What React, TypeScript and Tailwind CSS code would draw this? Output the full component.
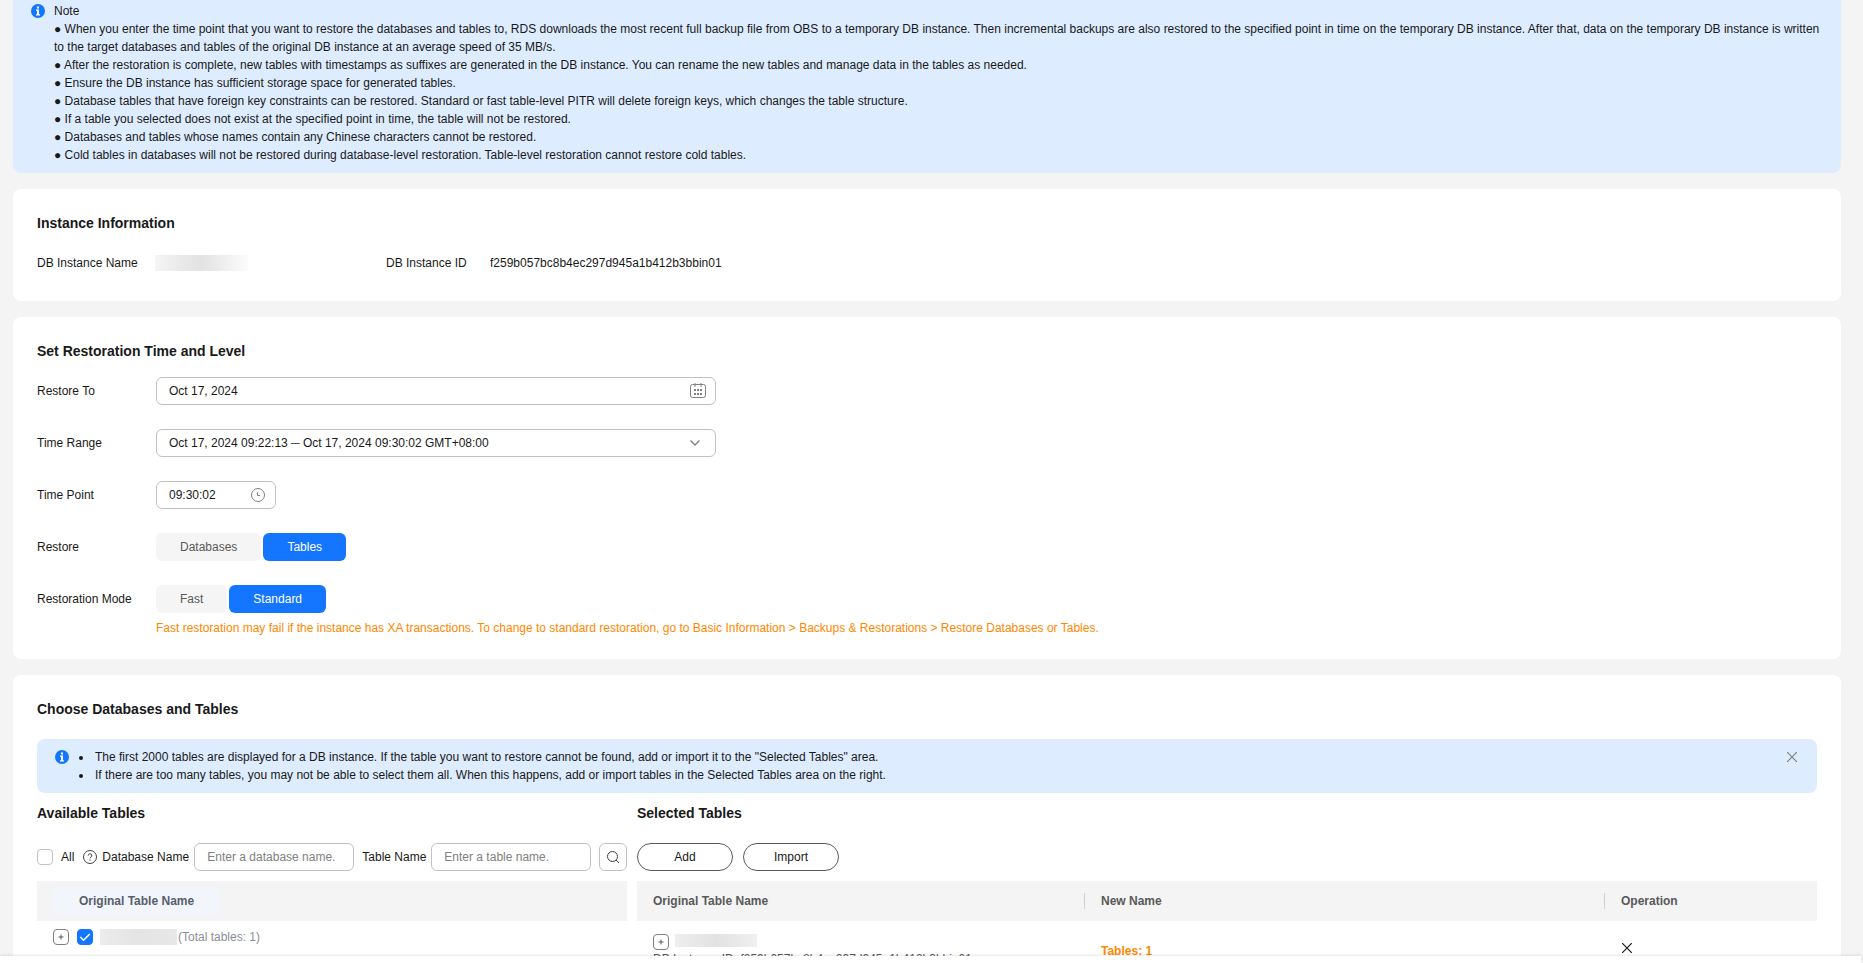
import { useState } from "react";

const notes = [
  "When you enter the time point that you want to restore the databases and tables to, RDS downloads the most recent full backup file from OBS to a temporary DB instance. Then incremental backups are also restored to the specified point in time on the temporary DB instance. After that, data on the temporary DB instance is written to the target databases and tables of the original DB instance at an average speed of 35 MB/s.",
  "After the restoration is complete, new tables with timestamps as suffixes are generated in the DB instance. You can rename the new tables and manage data in the tables as needed.",
  "Ensure the DB instance has sufficient storage space for generated tables.",
  "Database tables that have foreign key constraints can be restored. Standard or fast table-level PITR will delete foreign keys, which changes the table structure.",
  "If a table you selected does not exist at the specified point in time, the table will not be restored.",
  "Databases and tables whose names contain any Chinese characters cannot be restored.",
  "Cold tables in databases will not be restored during database-level restoration. Table-level restoration cannot restore cold tables.",
];

const instanceId = "f259b057bc8b4ec297d945a1b412b3bbin01";

function InfoIcon() {
  return (
    <svg className="w-3.5 h-3.5 shrink-0" viewBox="0 0 14 14" aria-hidden="true">
      <circle cx="7" cy="7" r="7" fill="#1476ff" />
      <path
        d="M6 2.500h2v2H6zM5 5.500H8v4.700h1v1.300H5v-1.300h1V6.800H5z"
        fill="#fff"
      />
    </svg>
  );
}

function CloseIcon() {
  return (
    <svg
      className="w-2.5 h-2.5"
      viewBox="0 0 10 10"
      fill="none"
      stroke="currentColor"
      strokeWidth="1.2"
      aria-hidden="true"
    >
      <path d="M0 0l10 10M10 0L0 10" />
    </svg>
  );
}

function ExpandButton({ label }: { label: string }) {
  return (
    <button
      type="button"
      aria-label={label}
      className="w-4 h-4 shrink-0 rounded border border-[#808080] flex items-center justify-center text-[#595959]"
    >
      <svg
        className="w-3.5 h-3.5"
        viewBox="0 0 14 14"
        stroke="currentColor"
        aria-hidden="true"
      >
        <path d="M7 4.500v5M4.500 7h5" />
      </svg>
    </button>
  );
}

function Segmented({
  label,
  options,
  value,
  onChange,
}: {
  label: string;
  options: string[];
  value: string;
  onChange: (v: string) => void;
}) {
  return (
    <div role="group" aria-label={label} className="flex gap-0.5">
      {options.map((option) => (
        <button
          key={option}
          type="button"
          aria-pressed={option === value}
          onClick={() => onChange(option)}
          className={
            option === value
              ? "h-7 px-6 rounded-md bg-[#1476ff] text-white"
              : "h-7 px-6 rounded-md bg-[#f5f5f5] text-[#595959]"
          }
        >
          {option}
        </button>
      ))}
    </div>
  );
}

export default function App() {
  const [level, setLevel] = useState("Tables");
  const [mode, setMode] = useState("Standard");
  const [showTip, setShowTip] = useState(true);

  return (
    <div className="h-screen flex flex-col bg-[#f4f4f4] font-['Liberation_Sans',Arial,sans-serif] text-xs leading-[18px] text-[#191919]">
      <main className="flex-1 min-h-0 overflow-y-auto [scrollbar-width:none] pl-[13px] pr-[22px] flex flex-col gap-4">
        {/* Note */}
        <section className="shrink-0 flex gap-[9px] bg-[#deecff] rounded-b-lg pt-0.5 pb-[9px] pl-[18px] pr-5">
          <div className="pt-0.5">
            <InfoIcon />
          </div>
          <div>
            <p>Note</p>
            {notes.map((note) => (
              <p key={note}>● {note}</p>
            ))}
          </div>
        </section>

        {/* Instance information */}
        <section className="shrink-0 bg-white rounded-lg px-6 pt-6 pb-[29px]">
          <h2 className="text-sm leading-5 font-bold">Instance Information</h2>
          <dl className="flex items-center mt-[21px]">
            <dt className="w-[118px]">DB Instance Name</dt>
            <dd className="w-[231px]">
              <div className="w-[93px] h-4 bg-linear-to-r from-[#f4f4f4] via-[#e2e2e2] to-[#fcfcfc]" />
            </dd>
            <dt className="w-[104px]">DB Instance ID</dt>
            <dd>{instanceId}</dd>
          </dl>
        </section>

        {/* Restoration settings */}
        <section className="shrink-0 bg-white rounded-lg px-6 pt-6 pb-[22px]">
          <h2 className="text-sm leading-5 font-bold">
            Set Restoration Time and Level
          </h2>
          <div className="grid grid-cols-[119px_1fr] items-center gap-y-6 mt-4">
            <label htmlFor="restore-to">Restore To</label>
            <div className="relative w-[560px]">
              <input
                id="restore-to"
                defaultValue="Oct 17, 2024"
                className="block w-full h-7 px-3 border border-[#c2c2c2] rounded-md"
              />
              <svg
                className="absolute right-2.5 top-1.5 w-4 h-4 text-[#808080]"
                viewBox="0 0 16 16"
                fill="none"
                stroke="currentColor"
                aria-hidden="true"
              >
                <rect x="0.5" y="1.5" width="15" height="13" rx="2" />
                <path d="M5 0v4M11 0v4" />
                <path
                  d="M4 7h2M7 7h2M10 7h2M4 11h2M7 11h2M10 11h2"
                  strokeWidth="2"
                />
              </svg>
            </div>

            <label htmlFor="time-range">Time Range</label>
            <div className="relative w-[560px]">
              <select
                id="time-range"
                className="block w-full h-7 px-3 border border-[#c2c2c2] rounded-md appearance-none bg-white"
              >
                <option>
                  Oct 17, 2024 09:22:13 ─ Oct 17, 2024 09:30:02 GMT+08:00
                </option>
              </select>
              <svg
                className="absolute right-4 top-[11px] w-2.5 h-1.5 pointer-events-none text-[#808080]"
                viewBox="0 0 10 6"
                fill="none"
                stroke="currentColor"
                strokeWidth="1.4"
                aria-hidden="true"
              >
                <path d="M0.5 0.5L5 5l4.500-4.500" />
              </svg>
            </div>

            <label htmlFor="time-point">Time Point</label>
            <div className="relative w-[120px]">
              <input
                id="time-point"
                defaultValue="09:30:02"
                className="block w-full h-7 px-3 border border-[#c2c2c2] rounded-md"
              />
              <svg
                className="absolute right-[11px] top-[7px] w-3.5 h-3.5 text-[#808080]"
                viewBox="0 0 14 14"
                fill="none"
                stroke="currentColor"
                aria-hidden="true"
              >
                <circle cx="7" cy="7" r="6.5" />
                <path d="M6.500 4.500v3H9" />
              </svg>
            </div>

            <span>Restore</span>
            <Segmented
              label="Restore"
              options={["Databases", "Tables"]}
              value={level}
              onChange={setLevel}
            />

            <span>Restoration Mode</span>
            <Segmented
              label="Restoration Mode"
              options={["Fast", "Standard"]}
              value={mode}
              onChange={setMode}
            />
          </div>
          <p className="pl-[119px] mt-1.5 text-[#ff8800]">
            Fast restoration may fail if the instance has XA transactions. To
            change to standard restoration, go to Basic Information &gt; Backups
            &amp; Restorations &gt; Restore Databases or Tables.
          </p>
        </section>

        {/* Databases and tables */}
        <section className="shrink-0 bg-white rounded-t-lg px-6 pt-6 pb-6">
          <h2 className="text-sm leading-5 font-bold">
            Choose Databases and Tables
          </h2>

          {showTip && (
            <div className="flex items-start mt-5 bg-[#deecff] rounded-lg py-[9px] pl-[18px] pr-5">
              <div className="pt-0.5">
                <InfoIcon />
              </div>
              <ul className="flex-1 list-disc pl-6">
                <li className="pl-0.5">
                  The first 2000 tables are displayed for a DB instance. If the
                  table you want to restore cannot be found, add or import it to
                  the "Selected Tables" area.
                </li>
                <li className="pl-0.5">
                  If there are too many tables, you may not be able to select
                  them all. When this happens, add or import tables in the
                  Selected Tables area on the right.
                </li>
              </ul>
              <button
                type="button"
                aria-label="Close"
                onClick={() => setShowTip(false)}
                className="mt-1 text-[#808080]"
              >
                <CloseIcon />
              </button>
            </div>
          )}

          <div className="flex gap-2.5 mt-2.5">
            {/* Available tables */}
            <div className="w-[590px] shrink-0">
              <h3 className="text-sm leading-5 font-bold">Available Tables</h3>
              <div className="flex items-center mt-5">
                <input
                  id="all"
                  type="checkbox"
                  className="w-4 h-4 appearance-none border border-[#c2c2c2] rounded-sm"
                />
                <label htmlFor="all" className="ml-2">
                  All
                </label>
                <svg
                  className="w-3.5 h-3.5 ml-[9px] mr-[5px]"
                  viewBox="0 0 14 14"
                  fill="none"
                  stroke="#404040"
                  aria-hidden="true"
                >
                  <circle cx="7" cy="7" r="6.5" />
                  <path d="M5.200 5.600a1.800 1.800 0 1 1 2.700 1.500c-.6.4-.9.6-.9 1.300M7 9.500v1.200" />
                </svg>
                <label htmlFor="db-name" className="w-[92px]">
                  Database Name
                </label>
                <input
                  id="db-name"
                  placeholder="Enter a database name."
                  className="w-40 h-7 px-3 border border-[#c2c2c2] rounded-md placeholder:text-[#808080]"
                />
                <label htmlFor="table-name" className="ml-2 w-[69px]">
                  Table Name
                </label>
                <input
                  id="table-name"
                  placeholder="Enter a table name."
                  className="w-40 h-7 px-3 border border-[#c2c2c2] rounded-md placeholder:text-[#808080]"
                />
                <button
                  type="button"
                  aria-label="Search"
                  className="ml-auto w-7 h-7 border border-[#c2c2c2] rounded-md flex items-center justify-center"
                >
                  <svg
                    className="w-3.5 h-3.5"
                    viewBox="0 0 14 14"
                    fill="none"
                    stroke="#404040"
                    aria-hidden="true"
                  >
                    <circle cx="6.5" cy="6.5" r="5" />
                    <path d="M10 10l3 3" />
                  </svg>
                </button>
              </div>
              <table className="w-full mt-2.5">
                <thead>
                  <tr className="h-10 bg-[#f4f4f4]">
                    <th className="text-left pl-4 py-0">
                      <div className="w-[166px] h-7 pl-[26px] leading-7 bg-[#f2f5fc] text-[#575d6c]">
                        Original Table Name
                      </div>
                    </th>
                  </tr>
                </thead>
                <tbody>
                  <tr>
                    <td className="pl-4 pt-[7px] pb-2">
                      <div className="flex items-center">
                        <ExpandButton label="Expand database" />
                        <label className="flex items-center ml-2 text-[#8a8e99]">
                          <span className="relative w-4 h-4">
                            <input
                              type="checkbox"
                              defaultChecked
                              className="peer block w-4 h-4 appearance-none border border-[#c2c2c2] rounded-sm checked:bg-[#1476ff] checked:border-[#1476ff]"
                            />
                            <svg
                              className="absolute inset-0 w-4 h-4 pointer-events-none invisible peer-checked:visible"
                              viewBox="0 0 16 16"
                              fill="none"
                              stroke="#fff"
                              strokeWidth="1.6"
                              aria-hidden="true"
                            >
                              <path d="M3.300 8l3.200 3.200L12.800 5" />
                            </svg>
                          </span>
                          <span className="w-[77px] h-4 ml-[7px] mr-px bg-linear-to-r from-[#ececec] via-[#e4e4e4] to-[#e8e8e8]" />
                          (Total tables: 1)
                        </label>
                      </div>
                    </td>
                  </tr>
                </tbody>
              </table>
            </div>

            {/* Selected tables */}
            <div className="flex-1 min-w-0">
              <h3 className="text-sm leading-5 font-bold">Selected Tables</h3>
              <div className="flex gap-2.5 mt-5">
                <button
                  type="button"
                  className="w-24 h-7 rounded-full border border-[#595959]"
                >
                  Add
                </button>
                <button
                  type="button"
                  className="w-24 h-7 rounded-full border border-[#595959]"
                >
                  Import
                </button>
              </div>
              <table className="w-full mt-2.5 table-fixed">
                <colgroup>
                  <col className="w-[447px]" />
                  <col />
                  <col className="w-[213px]" />
                </colgroup>
                <thead>
                  <tr className="h-10 bg-[#f4f4f4] text-[#595959]">
                    <th className="p-0 text-left">
                      <div className="pl-4">Original Table Name</div>
                    </th>
                    <th className="p-0 text-left">
                      <div className="h-4 leading-4 border-l border-[#d0d0d0] pl-4">
                        New Name
                      </div>
                    </th>
                    <th className="p-0 text-left">
                      <div className="h-4 leading-4 border-l border-[#d0d0d0] pl-4">
                        Operation
                      </div>
                    </th>
                  </tr>
                </thead>
                <tbody>
                  <tr>
                    <td className="pl-4 py-[13px] text-[#595959]">
                      <div className="flex gap-1.5">
                        <ExpandButton label="Expand instance" />
                        <div className="w-[82px] h-[13px] bg-linear-to-r from-[#eeeeee] via-[#e2e2e2] to-[#f0f0f0]" />
                      </div>
                      <p>DB Instance ID: {instanceId}</p>
                    </td>
                    <td className="pl-[17px] font-bold text-[#ff8800]">
                      Tables: 1
                    </td>
                    <td className="pl-[18px] pb-1.5">
                      <button
                        type="button"
                        aria-label="Remove"
                        className="block"
                      >
                        <CloseIcon />
                      </button>
                    </td>
                  </tr>
                </tbody>
              </table>
            </div>
          </div>
        </section>
      </main>

      {/* Bottom action bar */}
      <footer className="relative shrink-0 h-[7px] mr-0.5 bg-white shadow-[0_-1px_3px_rgba(0,0,0,0.1)]" />
    </div>
  );
}
